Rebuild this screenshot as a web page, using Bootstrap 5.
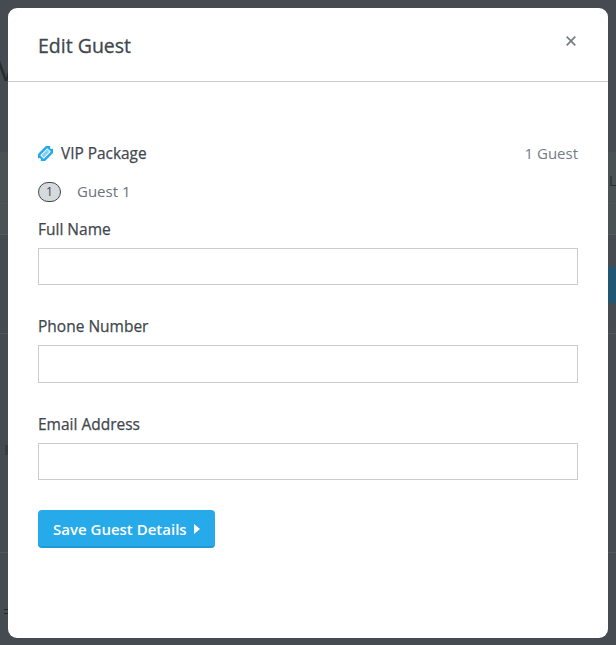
<!DOCTYPE html>
<html lang="en">
<head>
<meta charset="utf-8">
<title>Edit Guest</title>
<link href="https://cdn.jsdelivr.net/npm/bootstrap@5.3.0/dist/css/bootstrap.min.css" rel="stylesheet">
<style>
html,body{height:100%;margin:0}
body{background:#454b50;font-family:"Open Sans",sans-serif;color:#3f474d;overflow:hidden;position:relative}
.bg-v{position:absolute;left:-3px;top:52px;font-size:30px;color:#262b2e;line-height:1.2}
.bg-band{position:absolute;left:0;right:0;top:152px;height:83px;background:#4a5254;border-bottom:1px solid #555b60}
.bg-l{position:absolute;left:609px;top:170px;font-size:14px;color:#262b2e}
.bg-line{position:absolute;left:0;right:0;height:1px;background:#50565b}
.bg-line-a{top:203px}
.bg-line-b{top:333px}
.bg-line-c{top:552px}
.bg-teal{position:absolute;left:608px;right:0;top:267px;height:36px;background:#1f5673}
.bg-mark{position:absolute;left:4px;top:609px;width:5px;height:5px;border-top:1px solid #24282b;border-bottom:1px solid #24282b}
.bg-tick{position:absolute;left:5px;top:445px;width:3px;height:10px;background:#383d41}
.sheet{position:relative;margin:8px;width:600px;height:630px;background:#fff;border:0;border-radius:9px;overflow:hidden}
.sheet-head{height:74px;padding:0 30px;border-bottom:1px solid #ccc}
.sheet-title{font-size:19.500px;font-weight:400;-webkit-text-stroke:.3px #3f474d;color:#3f474d;line-height:24px;margin:2px 0 0}
.sheet-close{width:14px;height:14px;padding:0;border:0;background:none;margin:-7px 0 0;display:flex;align-items:center;justify-content:center}
.sheet-body{padding:59px 30px 0}
.pkg-row{height:24px;font-size:15.400px;line-height:24px}
.pkg-name{font-weight:400;-webkit-text-stroke:.25px #3f474d;color:#3f474d;margin-top:2px}
.pkg-count{color:#757c82;font-size:15px}
.guest-row{height:24px;margin-top:14px;font-size:15px;line-height:24px;color:#6b7278}
.guest-num{width:23px;height:20px;border:1px solid #3f474d;border-radius:10px;background:#d5dadd;font-size:12px;line-height:18px;text-align:center;color:#3f474d;margin:2px 16px 0 0}
.fld{margin-bottom:30px}
.fld-first{margin-top:15px}
.fld-label{display:block;font-size:15.500px;font-weight:400;-webkit-text-stroke:.25px #3f474d;color:#3f474d;line-height:22px;margin:0 0 8px}
.fld-input{height:37px;border:1px solid #ccc;border-radius:0;padding:6px 12px;box-shadow:none}
.fld-tall{height:38px}
.save-btn{display:inline-flex;align-items:center;gap:7px;height:38px;width:177px;padding:2px 0 0 15px;margin-top:0;background:#27aae9;border:0;border-bottom:2px solid #1f9ad6;border-radius:4px;color:#fff;font-size:15px;font-weight:600;white-space:nowrap}
.save-btn:hover{background:#27aae9;color:#fff}
</style>
</head>
<body>
<div class="bg-v">V</div>
<div class="bg-band"></div>
<div class="bg-l">L</div>
<div class="bg-line bg-line-a"></div>
<div class="bg-line bg-line-b"></div>
<div class="bg-line bg-line-c"></div>
<div class="bg-teal"></div>
<div class="bg-tick"></div>
<div class="bg-mark"></div>
<div class="sheet modal-content">
  <div class="sheet-head d-flex align-items-center justify-content-between">
    <h5 class="sheet-title">Edit Guest</h5>
    <button type="button" class="sheet-close" aria-label="Close">
      <svg width="10" height="10" viewBox="0 0 10 10"><path d="M.7.7l8.6 8.6M9.3.7L.7 9.300" stroke="#757c82" stroke-width="1.7" fill="none"/></svg>
    </button>
  </div>
  <div class="sheet-body">
    <div class="pkg-row d-flex justify-content-between align-items-center">
      <div class="d-flex align-items-center gap-2">
        <svg width="15" height="15" viewBox="-7.500 -7.500 15 15"><g transform="rotate(-45)"><path fill="#27aae9" d="M-8.500-5H8.500V-1.500A1.500 1.500 0 0 0 8.500 1.500V5H-8.500V1.500A1.500 1.500 0 0 0-8.500-1.500z"/><rect x="-4.500" y="-2" width="9" height="4" fill="#7fd0f5" stroke="#fff" stroke-width="1"/></g></svg>
        <span class="pkg-name">VIP Package</span>
      </div>
      <span class="pkg-count">1 Guest</span>
    </div>
    <div class="guest-row d-flex align-items-center">
      <span class="guest-num">1</span><span>Guest 1</span>
    </div>
    <form>
      <div class="fld fld-first">
        <label class="fld-label" for="n">Full Name</label>
        <input id="n" class="form-control fld-input" type="text">
      </div>
      <div class="fld">
        <label class="fld-label" for="p">Phone Number</label>
        <input id="p" class="form-control fld-input fld-tall" type="text">
      </div>
      <div class="fld">
        <label class="fld-label" for="e">Email Address</label>
        <input id="e" class="form-control fld-input" type="text">
      </div>
      <button type="button" class="btn save-btn">Save Guest Details
        <svg width="6" height="10" viewBox="0 0 6 10"><path fill="#fff" d="M0 0l6 5-6 5z"/></svg>
      </button>
    </form>
  </div>
</div>
<script src="https://cdn.jsdelivr.net/npm/bootstrap@5.3.0/dist/js/bootstrap.bundle.min.js"></script>
</body>
</html>
